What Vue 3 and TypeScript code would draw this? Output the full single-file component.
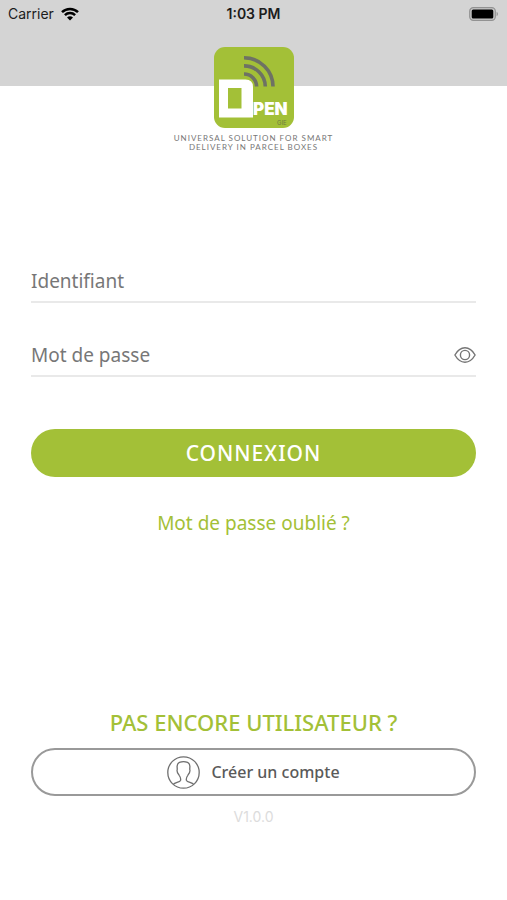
<script setup lang="ts">
import { ref } from 'vue'

const login = ref<string>('')
const password = ref<string>('')
const revealed = ref<boolean>(false)
</script>

<template>
  <div class="screen">
    <header class="band">
      <div class="status">
        <div class="carrier">
          <span>Carrier</span>
          <svg class="wifi" viewBox="0 0 18 14" aria-hidden="true">
            <path d="M1 5.200a11.400 11.400 0 0 1 16 0M3.900 8.200a7.300 7.300 0 0 1 10.200 0" fill="none" stroke="#000" stroke-width="2.500" />
            <path d="M9 13.600 6 10.600a4.300 4.300 0 0 1 6 0z" fill="#000" />
          </svg>
        </div>
        <time class="clock">1:03 PM</time>
        <div class="power">
          <svg class="battery" viewBox="0 0 30 14" aria-hidden="true">
            <rect x=".7" y=".7" width="25.600" height="12.600" rx="3.600" fill="#c9c9c9" stroke="#929292" stroke-width="1.200" />
            <rect x="2.700" y="2.500" width="21.600" height="9" rx="1.500" fill="#000" />
            <path d="M27.600 4.800c1.800.7 1.800 3.700 0 4.400z" fill="#929292" />
          </svg>
        </div>
      </div>
    </header>

    <main class="content">
      <div class="brand">
        <svg class="logo" viewBox="0 0 80 81" role="img" aria-label="Open GIE">
          <rect width="80" height="81" rx="11" fill="#a3c037" />
          <g fill="none" stroke="#6e7264" stroke-width="3.600">
            <path d="M30 10.800A29 28.800 0 0 1 59 39.600" />
            <path d="M30 18.900A21.300 20.700 0 0 1 51.300 39.600" />
            <path d="M30 27A12.600 12.600 0 0 1 42.600 39.600" />
          </g>
          <path d="M5 32.500H31.500Q39 32.500 39 40V70.500H5zM14 41V61.500H27.500V41z" fill="#fff" fill-rule="evenodd" />
          <text x="39" y="68" class="logo-name">PEN</text>
          <text x="63" y="78" class="logo-sub">GIE</text>
        </svg>
        <p class="tagline">UNIVERSAL SOLUTION FOR SMART<br />DELIVERY IN PARCEL BOXES</p>
      </div>

      <form class="form" @submit.prevent>
        <div class="field">
          <input v-model="login" type="text" placeholder="Identifiant" aria-label="Identifiant" />
        </div>
        <div class="field">
          <input v-model="password" :type="revealed ? 'text' : 'password'" placeholder="Mot de passe" aria-label="Mot de passe" />
          <button class="reveal" type="button" aria-label="Afficher le mot de passe" @click="revealed = !revealed">
            <svg viewBox="0 0 22 16" aria-hidden="true">
              <g fill="none" stroke="#757575" stroke-width="1.400">
                <path d="M.9 8Q5 .8 11 .8T21.100 8Q17 15.200 11 15.200T.9 8z" />
                <circle cx="11" cy="8" r="4.600" />
              </g>
            </svg>
          </button>
        </div>
        <button class="submit" type="submit">CONNEXION</button>
        <a class="forgot" href="#oubli">Mot de passe oublié ?</a>
      </form>

      <section class="signup">
        <h2>PAS ENCORE UTILISATEUR ?</h2>
        <button class="create" type="button">
          <svg viewBox="0 0 33 33" aria-hidden="true">
            <g fill="none" stroke="#6f6f6f" stroke-width="1.300" stroke-linejoin="round">
              <circle cx="16.500" cy="16.500" r="15.700" />
              <path d="M6.300 28.400C8 26.500 12.700 26.300 13.500 24.500C14 23 13.200 20.800 12.300 19.500C11.500 18.200 10 16.500 10 14.500C10.500 13.500 10.100 12 10.100 10.300C10.200 7.500 12 5.600 16.500 5.600C21 5.600 22.800 7.500 22.900 10.300C22.900 12 22.500 13.500 23 14.500C23 16.500 21.500 18.200 20.700 19.500C19.800 20.800 19 23 19.500 24.500C20.300 26.300 25 26.500 26.700 28.400" />
            </g>
          </svg>
          <span>Créer un compte</span>
        </button>
        <p class="version">V1.0.0</p>
      </section>
    </main>
  </div>
</template>

<style>
body {
  margin: 0;
  background: #fff;
}
</style>

<style scoped>
.screen {
  min-height: 100vh;
  background: #fff;
  font-family: "Noto Sans", sans-serif;
}

.band {
  height: 86px;
  background: #d4d4d4;
}

.status {
  display: grid;
  grid-template-columns: 1fr auto 1fr;
  align-items: center;
  height: 28px;
  padding: 0 8px;
  font: 14px/20px Inter, sans-serif;
  color: #1c1c1c;
}

.carrier {
  display: flex;
  align-items: center;
  gap: 7px;
}

.wifi {
  width: 18px;
  height: 14px;
}

.clock {
  font-weight: 600;
}

.power {
  display: flex;
  justify-content: flex-end;
}

.battery {
  width: 30px;
  height: 14px;
}

.content {
  display: flex;
  flex-direction: column;
  padding: 0 31px;
}

.brand {
  display: flex;
  flex-direction: column;
  align-items: center;
  margin-top: -39px;
}

.logo {
  width: 80px;
  height: 81px;
}

.logo-name {
  font: 900 17px Inter, sans-serif;
  fill: #fff;
}

.logo-sub {
  font: 6px Inter, sans-serif;
  fill: #6e7a40;
}

.tagline {
  margin: 6px 0 0;
  font: 8px/9px Lato, sans-serif;
  letter-spacing: 1px;
  text-align: center;
  color: #777;
}

.form {
  display: flex;
  flex-direction: column;
  margin-top: 109px;
}

.field {
  display: flex;
  align-items: center;
  height: 40px;
  margin-bottom: 32px;
  border-bottom: 2px solid #e9e9e9;
}

.field input {
  flex: 1;
  min-width: 0;
  height: 40px;
  padding: 0;
  border: 0;
  outline: 0;
  background: none;
  font: 19px/24px "Noto Sans", sans-serif;
  color: #555;
}

.field input::placeholder {
  color: #777;
  opacity: 1;
}

.reveal {
  display: flex;
  padding: 0;
  border: 0;
  background: none;
}

.reveal svg {
  width: 22px;
  height: 16px;
}

.submit {
  height: 48px;
  margin-top: 20px;
  border: 0;
  border-radius: 24px;
  background: #a3c037;
  font: 500 21px/28px "Noto Sans", sans-serif;
  letter-spacing: 1px;
  color: #fff;
}

.forgot {
  align-self: center;
  margin-top: 32px;
  font-size: 19px;
  line-height: 28px;
  text-decoration: none;
  color: #a3c037;
}

.signup {
  display: flex;
  flex-direction: column;
  margin-top: 171px;
}

.signup h2 {
  margin: 0 0 12px;
  font-size: 22px;
  font-weight: 500;
  line-height: 28px;
  text-align: center;
  color: #a3c037;
}

.create {
  display: flex;
  align-items: center;
  justify-content: center;
  gap: 11px;
  height: 48px;
  padding: 0;
  border: 2px solid #999;
  border-radius: 24px;
  background: #fff;
  font: 500 16px/24px "Noto Sans", sans-serif;
  color: #5a5a5a;
}

.create svg {
  width: 33px;
  height: 33px;
}

.version {
  margin: 11px 0 0;
  font: 14px/20px Inter, sans-serif;
  text-align: center;
  color: #dcdcdc;
}
</style>
